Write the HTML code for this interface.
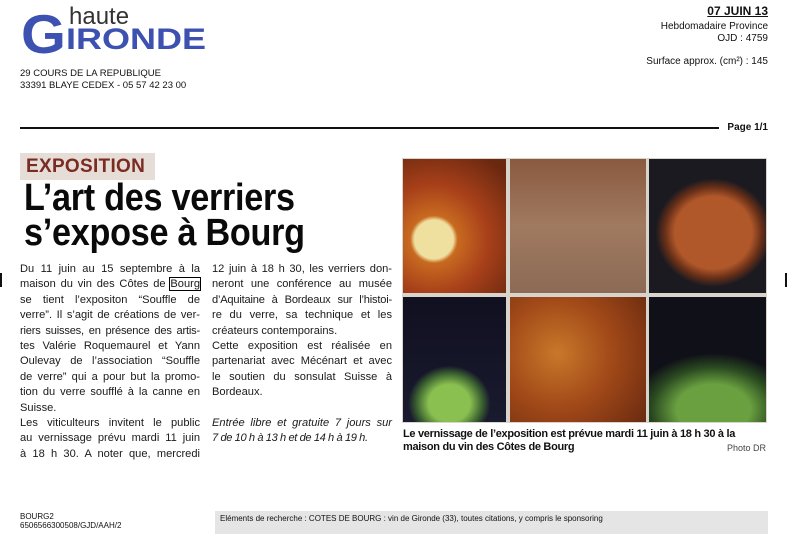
<!DOCTYPE html>
<html><head><meta charset="utf-8"><style>
*{margin:0;padding:0;box-sizing:border-box}
body{width:787px;height:536px;background:#fff;position:relative;overflow:hidden;font-family:"Liberation Sans",sans-serif;color:#111}
.a{position:absolute}
.ln{position:absolute;font-size:11.1px;line-height:15.4px;white-space:nowrap;text-align:justify;text-align-last:justify;color:#1a1a1a;overflow:visible}
.cell{position:absolute}
</style></head><body>
<!-- logo -->
<div class="a" style="left:21px;top:2px;font-size:55px;font-weight:bold;color:#3d52b0;transform:scaleX(1.05);transform-origin:left">G</div>
<div class="a" style="left:69px;top:3px;font-size:24px;color:#333">haute</div>
<div class="a" style="left:66px;top:23px;font-size:30px;font-weight:bold;color:#3d52b0;transform:scaleX(1.2);transform-origin:left">IRONDE</div>
<div class="a" style="left:20px;top:68px;font-size:9.5px;line-height:12px;color:#111">29 COURS DE LA REPUBLIQUE<br>33391 BLAYE CEDEX - 05 57 42 23 00</div>
<div class="a" style="right:19px;top:4px;font-size:12px;font-weight:bold;text-decoration:underline">07 JUIN 13</div>
<div class="a" style="right:19px;top:21px;font-size:10px;line-height:12px;text-align:right">Hebdomadaire Province<br>OJD : 4759</div>
<div class="a" style="right:19px;top:56px;font-size:10px">Surface approx. (cm²) : 145</div>
<div class="a" style="left:20px;top:127px;width:699px;height:1.5px;background:#111"></div>
<div class="a" style="right:19px;top:122px;font-size:10px;font-weight:bold">Page 1/1</div>
<div class="a" style="left:0;top:273px;width:2px;height:14px;background:#111"></div>
<div class="a" style="left:785px;top:273px;width:2px;height:14px;background:#111"></div>
<!-- article -->
<div class="a" style="left:20px;top:153px;width:135px;height:27px;background:#e6ddd6"></div>
<div class="a" style="left:26px;top:156px;font-size:19px;font-weight:bold;color:#7a2b22;letter-spacing:0.3px">EXPOSITION</div>
<div class="a" style="left:24px;top:181px;font-size:38px;line-height:35px;font-weight:bold;letter-spacing:-0.3px;color:#0a0a0a;transform:scaleX(0.9);transform-origin:left">L’art des verriers<br>s’expose à Bourg</div>
<div class="a" style="left:20px;top:262px;width:180px">
<div class="ln" style="top:0;width:180px">Du 11 juin au 15 septembre à la</div>
<div class="ln" style="top:15.4px;width:180px">maison du vin des Côtes de <span style="outline:1px solid #000">Bourg</span></div>
<div class="ln" style="top:30.8px;width:180px">se tient l’expositon “Souffle de</div>
<div class="ln" style="top:46.2px;width:180px">verre”. Il s’agit de créations de ver-</div>
<div class="ln" style="top:61.6px;width:180px;letter-spacing:-0.2px">riers suisses, en présence des artis-</div>
<div class="ln" style="top:77px;width:180px">tes Valérie Roquemaurel et Yann</div>
<div class="ln" style="top:92.4px;width:180px">Oulevay de l’association “Souffle</div>
<div class="ln" style="top:107.8px;width:180px">de verre” qui a pour but la promo-</div>
<div class="ln" style="top:123.2px;width:180px">tion du verre soufflé à la canne en</div>
<div class="ln" style="top:138.6px;text-align-last:left">Suisse.</div>
<div class="ln" style="top:154px;width:180px">Les viticulteurs invitent le public</div>
<div class="ln" style="top:169.4px;width:180px">au vernissage prévu mardi 11 juin</div>
<div class="ln" style="top:184.8px;width:180px">à 18 h 30. A noter que, mercredi</div>
</div>
<div class="a" style="left:212px;top:262px;width:180px">
<div class="ln" style="top:0;width:180px">12 juin à 18 h 30, les verriers don-</div>
<div class="ln" style="top:15.4px;width:180px">neront une conférence au musée</div>
<div class="ln" style="top:30.8px;width:180px;letter-spacing:-0.2px">d’Aquitaine à Bordeaux sur l’histoi-</div>
<div class="ln" style="top:46.2px;width:180px">re du verre, sa technique et les</div>
<div class="ln" style="top:61.6px;text-align-last:left">créateurs contemporains.</div>
<div class="ln" style="top:77px;width:180px">Cette exposition est réalisée en</div>
<div class="ln" style="top:92.4px;width:180px">partenariat avec Mécénart et avec</div>
<div class="ln" style="top:107.8px;width:180px">le soutien du sonsulat Suisse à</div>
<div class="ln" style="top:123.2px;text-align-last:left">Bordeaux.</div>
<div class="ln" style="top:154px;width:180px;font-style:italic">Entrée libre et gratuite 7 jours sur</div>
<div class="ln" style="top:169.4px;font-style:italic;text-align-last:left;letter-spacing:-0.4px">7 de 10 h à 13 h et de 14 h à 19 h.</div>
</div>
<!-- photos -->
<div class="a" style="left:402px;top:158px;width:365px;height:265px;background:#d8d4cc"></div>
<div class="cell" style="left:403px;top:159px;width:103px;height:134px;background:radial-gradient(circle at 30% 60%,#efe0a0 0 18%,#c86a20 22%,#a8401a 50%,#6a2810 90%)"></div>
<div class="cell" style="left:510px;top:159px;width:136px;height:134px;background:linear-gradient(180deg,#8a5a40,#a07a60 50%,#8c6a55)"></div>
<div class="cell" style="left:649px;top:159px;width:117px;height:134px;background:radial-gradient(ellipse 55% 45% at 55% 55%,#b0582a 0 60%,#6a3018 75%,#1a1a20 90%),#15151c"></div>
<div class="cell" style="left:403px;top:297px;width:103px;height:125px;background:radial-gradient(ellipse 40% 30% at 45% 85%,#8ac050 0 50%,#3a6030 80%,transparent 100%),linear-gradient(180deg,#101020,#1a1a30)"></div>
<div class="cell" style="left:510px;top:297px;width:136px;height:125px;background:radial-gradient(circle at 35% 45%,#c8782a,#a04818 50%,#6a2a10 100%)"></div>
<div class="cell" style="left:649px;top:297px;width:117px;height:125px;background:radial-gradient(ellipse 70% 45% at 55% 90%,#6aa040 0 45%,#2a4a20 75%,transparent 100%),#101018"></div>
<div class="a" style="left:403px;top:428px;font-size:11px;font-weight:bold;line-height:13px;color:#111;letter-spacing:-0.3px">Le vernissage de l’exposition est prévue mardi 11 juin à 18 h 30 à la<br>maison du vin des Côtes de Bourg</div>
<div class="a" style="left:727px;top:443px;font-size:9px;color:#444">Photo DR</div>
<!-- footer -->
<div class="a" style="left:20px;top:512px;font-size:8px;line-height:9px;color:#111">BOURG2<br>6506566300508/GJD/AAH/2</div>
<div class="a" style="left:215px;top:511px;width:553px;height:23px;background:#e5e5e5"></div>
<div class="a" style="left:220px;top:514px;font-size:8px;color:#111">Eléments de recherche : COTES DE BOURG : vin de Gironde (33), toutes citations, y compris le sponsoring</div>
</body></html>
